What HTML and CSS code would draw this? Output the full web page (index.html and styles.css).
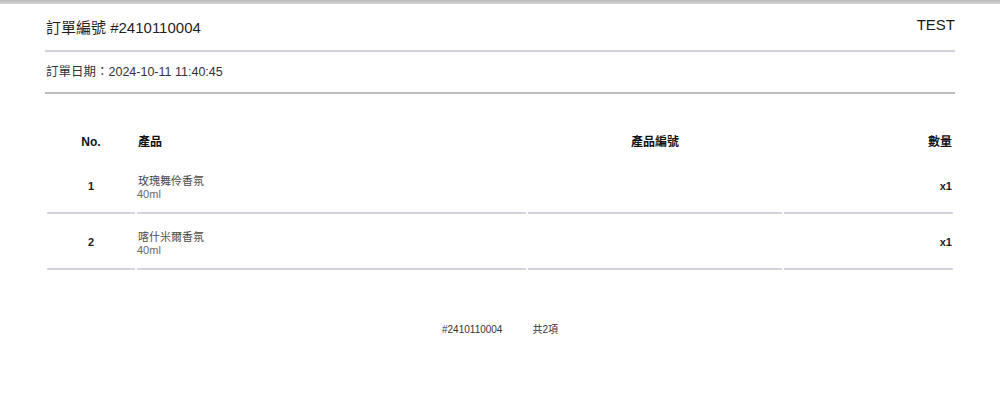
FILE: index.html
```html
<!DOCTYPE html>
<html lang="zh-Hant">
<head>
<meta charset="utf-8">
<title>訂單 #2410110004</title>
<link rel="stylesheet" href="styles.css">
</head>
<body>
<div class="topbar"></div>
<div class="page">
  <div class="head">
    <div class="title">訂單編號 #2410110004</div>
    <div class="brand">TEST</div>
  </div>
  <div class="date">訂單日期：2024-10-11 11:40:45</div>
  <table class="items">
    <thead>
      <tr>
        <th class="c-no">No.</th>
        <th class="c-prod">產品</th>
        <th class="c-code">產品編號</th>
        <th class="c-qty">數量</th>
      </tr>
    </thead>
    <tbody>
      <tr>
        <td class="c-no num">1</td>
        <td class="c-prod"><div class="pname">玫瑰舞伶香氛</div><div class="pvar">40ml</div></td>
        <td class="c-code"></td>
        <td class="c-qty qty">x1</td>
      </tr>
      <tr>
        <td class="c-no num">2</td>
        <td class="c-prod"><div class="pname">喀什米爾香氛</div><div class="pvar">40ml</div></td>
        <td class="c-code"></td>
        <td class="c-qty qty">x1</td>
      </tr>
    </tbody>
  </table>
  <div class="foot">
    <span>#2410110004</span>
    <span>共2項</span>
  </div>
</div>
</body>
</html>
```
FILE: styles.css
```css
html, body {
  margin: 0;
  padding: 0;
  background: #fff;
}
body {
  font-family: "Liberation Sans", "Noto Sans CJK TC", sans-serif;
  color: #222;
}
.topbar {
  height: 4px;
  background: linear-gradient(#b9b9bb, #d6d6d8);
}
.page {
  width: 910px;
  margin: 0 auto;
}
.head {
  height: 46px;
  display: flex;
  justify-content: space-between;
  align-items: flex-start;
  border-bottom: 2px solid #cfd2d9;
}
.title {
  margin-top: 14px;
  margin-left: 1px;
  font-size: 15px;
  line-height: 20px;
  color: #1f1f1f;
}
.brand {
  margin-top: 11px;
  font-size: 15px;
  line-height: 20px;
  color: #1a1a1a;
}
.date {
  padding: 12px 1px;
  font-size: 12.5px;
  line-height: 16px;
  color: #333;
  border-bottom: 2px solid #bdbdbd;
}
.items {
  width: 100%;
  margin-top: 32px;
  border-collapse: separate;
  border-spacing: 2px;
  table-layout: fixed;
}
.items th {
  padding: 7px 1px 9px;
  font-size: 12px;
  line-height: 14px;
  font-weight: bold;
  color: #111;
}
.items td {
  padding: 15px 1px 11px;
  font-size: 11px;
  line-height: 13px;
  border-bottom: 2px solid #d2d4db;
  vertical-align: middle;
}
.c-no { width: 86px; text-align: center; }
.c-prod { width: 387px; text-align: left; }
.c-code { width: 252px; text-align: center; }
.c-qty { text-align: right; }
.items th.c-prod { padding-left: 1px; }
.items td.c-prod { padding-left: 0; }
.items td.num,
.items td.qty {
  padding-top: 13px;
  padding-bottom: 13px;
  font-weight: bold;
  color: #222;
}
.pname {
  color: #4a4a4a;
  padding-left: 1px;
}
.pvar {
  color: #666;
}
.foot {
  margin-top: 51px;
  display: flex;
  justify-content: center;
  gap: 30px;
  font-size: 10px;
  line-height: 14px;
  color: #333;
}
```
